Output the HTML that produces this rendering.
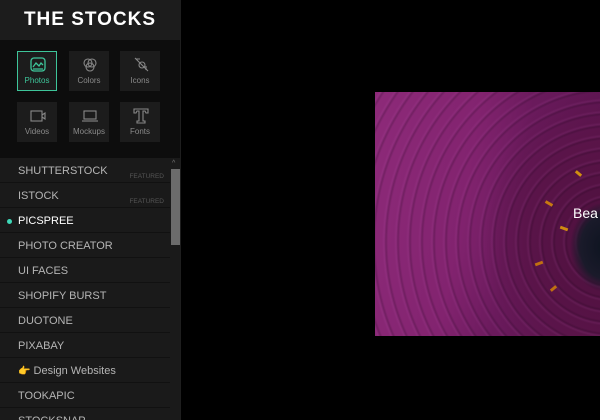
<!DOCTYPE html>
<html><head><meta charset="utf-8"><style>
*{margin:0;padding:0;box-sizing:border-box}
html,body{width:600px;height:420px;overflow:hidden}
body{background:#000;position:relative;font-family:"Liberation Sans",sans-serif}
.side{position:absolute;left:0;top:0;width:181px;height:420px;background:#0d0d0d;border-right:1px solid #1e1e1e;overflow:hidden}
.hdr{height:40px;background:#1c1c1c;color:#fff;font-weight:bold;font-size:19px;letter-spacing:1px;text-align:center;line-height:40px}
.tile{position:absolute;width:40px;height:40px;background:#1c1c1c;color:#8a8a8a;font-size:8px;text-align:center}
.tile svg{position:absolute;left:12px;top:5px}
.tile span{position:absolute;left:0;right:0;top:25px}
.tile.on{border:1px solid #3ec59a;color:#3ec59a}
.tile.on svg{left:11px;top:4px}.tile.on span{top:24px}
.list{position:absolute;left:0;top:158px;width:170px;height:262px;background:#1a1a1a;overflow:hidden}
.it{height:25px;border-bottom:1px solid #111;color:#b5b5b5;font-size:11px;line-height:26px;padding-left:18px;position:relative}
.it .f{position:absolute;right:6px;top:13px;font-size:6.5px;color:#555;line-height:12px}
.sb{position:absolute;left:170px;top:158px;width:11px;height:262px;background:#1a1a1a}
.th{position:absolute;left:1px;top:11px;width:9px;height:76px;background:#6b6b6b}
.img{position:absolute;left:375px;top:92px;width:225px;height:244px;overflow:hidden;
background:
radial-gradient(ellipse 35px 45px at 230px 155px,#0d1420 0,#1a1a2a 70%,transparent 100%),
repeating-radial-gradient(circle at 235px 150px,rgba(0,0,0,0) 0,rgba(0,0,0,0) 6px,rgba(20,0,20,.2) 8px,rgba(190,90,180,.12) 10px,rgba(0,0,0,0) 12px),
radial-gradient(ellipse 150px 190px at 235px 150px,#4a0f3a 0,#5a1449 55%,rgba(100,25,85,0) 85%),
linear-gradient(100deg,#8d2a79 0,#82236f 40%,#6a1a5c 60%,#5a1450 100%)}
</style></head><body>
<div class="side">
<div class="hdr">THE STOCKS</div>
<div class="tile on" style="left:17px;top:51px"><svg width="18" height="18" viewBox="0 0 18 18" fill="none" stroke="#3ec59a" stroke-width="1.3"><rect x="2" y="2" width="14" height="13" rx="3"/><path d="M4 11l3-4 3 3 2-3 2 2M4 13h10"/></svg><span>Photos</span></div>
<div class="tile" style="left:69px;top:51px"><svg width="18" height="18" viewBox="0 0 18 18" fill="none" stroke="#888" stroke-width="1.1"><circle cx="7" cy="7" r="4"/><circle cx="11" cy="7" r="4"/><circle cx="9" cy="11" r="4"/></svg><span>Colors</span></div>
<div class="tile" style="left:120px;top:51px"><svg width="18" height="18" viewBox="0 0 18 18" fill="none" stroke="#888" stroke-width="1.1"><path d="M3 2l13 13M4 3h4M14 10v4"/><circle cx="10" cy="9" r="3"/></svg><span>Icons</span></div>
<div class="tile" style="left:17px;top:102px"><svg width="18" height="18" viewBox="0 0 18 18" fill="none" stroke="#888" stroke-width="1.1"><rect x="2" y="4" width="11" height="10"/><path d="M13 8l3-2v6l-3-2"/></svg><span>Videos</span></div>
<div class="tile" style="left:69px;top:102px"><svg width="18" height="18" viewBox="0 0 18 18" fill="none" stroke="#888" stroke-width="1.1"><rect x="3" y="4" width="12" height="8"/><path d="M1 14h16"/></svg><span>Mockups</span></div>
<div class="tile" style="left:120px;top:102px"><svg width="18" height="18" viewBox="0 0 18 18" fill="none" stroke="#888" stroke-width="1.1"><path d="M2 2h14v4h-2l-1-2h-2v10h2v2H5v-2h2V4H5L4 6H2z"/></svg><span>Fonts</span></div>
<div class="list">
<div class="it">SHUTTERSTOCK<span class="f">FEATURED</span></div>
<div class="it">ISTOCK<span class="f">FEATURED</span></div>
<div class="it" style="color:#fff"><span style="position:absolute;left:7px;top:11px;width:5px;height:5px;border-radius:50%;background:#3ed8b8"></span>PICSPREE</div>
<div class="it">PHOTO CREATOR</div>
<div class="it">UI FACES</div>
<div class="it">SHOPIFY BURST</div>
<div class="it">DUOTONE</div>
<div class="it">PIXABAY</div>
<div class="it"><span style="color:#f0c020;font-size:10px">👉</span> Design Websites</div>
<div class="it">TOOKAPIC</div>
<div class="it">STOCKSNAP</div>
</div>
<div class="sb"><div style="position:absolute;left:2px;top:2px;color:#777;font-size:7px">^</div><div class="th"></div></div>
</div>
<div class="img">
<div style="position:absolute;left:170px;top:110px;width:8px;height:3px;background:#c87a10;transform:rotate(30deg)"></div>
<div style="position:absolute;left:185px;top:135px;width:8px;height:3px;background:#d08a10;transform:rotate(20deg)"></div>
<div style="position:absolute;left:160px;top:170px;width:8px;height:3px;background:#c07010;transform:rotate(-20deg)"></div>
<div style="position:absolute;left:200px;top:80px;width:7px;height:3px;background:#d09010;transform:rotate(40deg)"></div>
<div style="position:absolute;left:175px;top:195px;width:7px;height:3px;background:#c07010;transform:rotate(-40deg)"></div>
<div style="position:absolute;left:198px;top:113px;color:#fff;font-size:14px">Bea</div>
</div>
</body></html>
